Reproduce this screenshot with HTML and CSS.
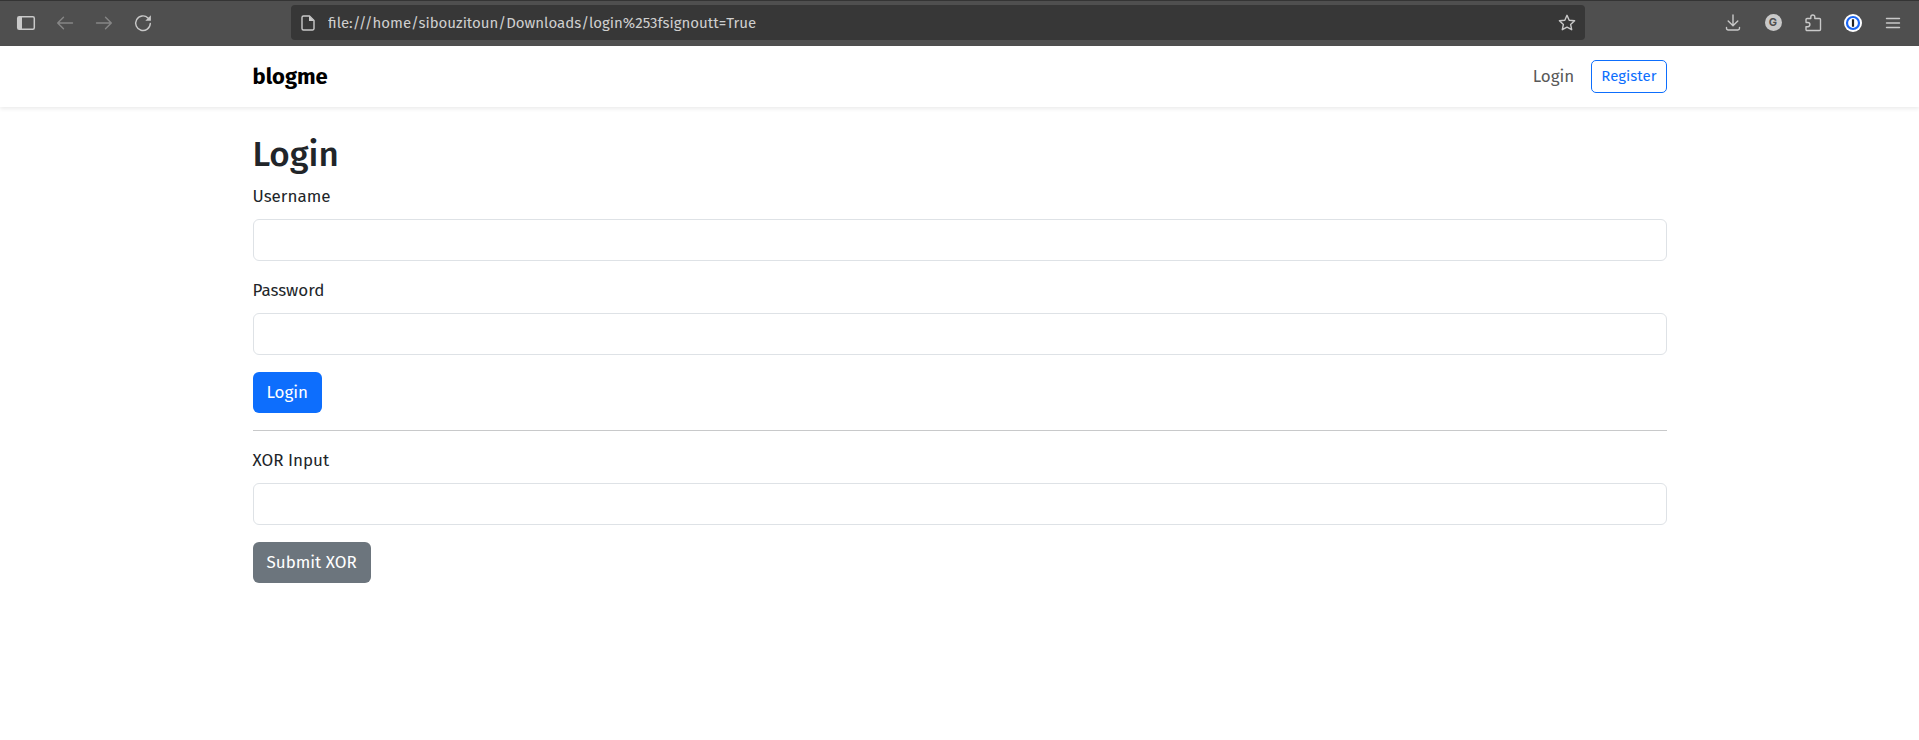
FILE: index.html
```html
<!DOCTYPE html>
<html lang="en">
<head>
    <meta charset="UTF-8">
    <meta name="viewport" content="width=device-width, initial-scale=1.0">
    <title>Login</title>
    <link rel="stylesheet" href="styles.css">
</head>
<body>
    <div class="toolbar">
        <div class="toolbar-left">
            <button type="button" class="tool" aria-label="Sidebar">
                <svg width="20" height="20" viewBox="0 0 20 20"><rect x="1.7" y="3.7" width="16.6" height="12.6" rx="1.5" fill="none" stroke="#c9c9c9" stroke-width="1.5"/><path d="M2 4h4v12H2z" fill="#c9c9c9"/></svg>
            </button>
            <button type="button" class="tool" aria-label="Back" disabled>
                <svg width="20" height="20" viewBox="0 0 20 20" class="line dim"><path d="M17.5 10H3M8.5 4.2L2.7 10l5.8 5.8"/></svg>
            </button>
            <button type="button" class="tool" aria-label="Forward" disabled>
                <svg width="20" height="20" viewBox="0 0 20 20" class="line dim"><path d="M2.5 10H17M11.5 4.2l5.8 5.8-5.8 5.8"/></svg>
            </button>
            <button type="button" class="tool" aria-label="Reload">
                <svg width="20" height="20" viewBox="0 0 20 20" class="line"><path d="M17.3 10.5a7.3 7.3 0 1 1-2.3-5.6l1 1"/><path d="M17.9 2.2v5.6h-5.6z" fill="#c9c9c9" stroke="none"/></svg>
            </button>
        </div>
        <div class="url-bar">
            <svg width="16" height="18" viewBox="0 0 16 18" class="line"><path d="M3.5 2h6L14 6.5v8a1.5 1.5 0 0 1-1.5 1.5h-9A1.5 1.5 0 0 1 2 14.5v-11A1.5 1.5 0 0 1 3.5 2z"/><path d="M9 2v5h5z" fill="#c9c9c9" stroke="none"/></svg>
            <input type="text" class="url-input" aria-label="Address" value="file:///home/sibouzitoun/Downloads/login%253fsignoutt=True">
            <button type="button" class="tool" aria-label="Bookmark">
                <svg width="20" height="20" viewBox="0 0 20 20" class="line"><path d="M10 2.3l2.2 4.9 5.4.6-4 3.6 1.100 5.300L10 14.100l-4.700 2.600 1.100-5.300-4-3.600 5.400-.6z"/></svg>
            </button>
        </div>
        <div class="toolbar-right">
            <button type="button" class="tool" aria-label="Downloads">
                <svg width="20" height="20" viewBox="0 0 20 20" class="line"><path d="M10 2v10.500M5.200 8l4.800 4.800L14.800 8M3.500 14.500v.8a1.700 1.700 0 0 0 1.700 1.700h9.600a1.700 1.700 0 0 0 1.700-1.700v-.8"/></svg>
            </button>
            <button type="button" class="tool" aria-label="Account">
                <span class="avatar">G</span>
            </button>
            <button type="button" class="tool" aria-label="Extensions">
                <svg width="20" height="20" viewBox="0 0 20 20" class="line"><path d="M3 8.500V6.500a1 1 0 0 1 1-1h3.800V4a2 2 0 0 1 4 0v1.500h4.700a1 1 0 0 1 1 1v10a1 1 0 0 1-1 1H4a1 1 0 0 1-1-1v-2.800h1.800a2.100 2.100 0 0 0 0-4.200H3"/></svg>
            </button>
            <button type="button" class="tool" aria-label="Password manager">
                <svg width="20" height="20" viewBox="0 0 20 20"><circle cx="10" cy="10" r="9" fill="#fff"/><circle cx="10" cy="10" r="6" fill="#fff" stroke="#1a66f5" stroke-width="2.2"/><rect x="8.900" y="6.300" width="2.200" height="7.400" rx=".5" fill="#222"/></svg>
            </button>
            <button type="button" class="tool" aria-label="Menu">
                <svg width="20" height="20" viewBox="0 0 20 20" class="line"><path d="M3.500 5.500h13M3.500 10h13M3.500 14.500h13"/></svg>
            </button>
        </div>
    </div>

    <header>
        <nav class="container navbar">
            <a class="brand" href="#">blogme</a>
            <div class="nav-links">
                <a class="nav-link" href="#">Login</a>
                <a class="btn-outline" href="#">Register</a>
            </div>
        </nav>
    </header>

    <main class="container content">
        <h2>Login</h2>
        <form>
            <label for="username">Username</label>
            <input type="text" class="form-control" id="username" name="username">

            <label for="password">Password</label>
            <input type="password" class="form-control" id="password" name="password">

            <button type="submit" class="btn btn-primary">Login</button>
        </form>
        <hr>
        <form>
            <label for="xor_input">XOR Input</label>
            <input type="text" class="form-control" id="xor_input" name="xor_input">

            <button type="submit" class="btn btn-secondary">Submit XOR</button>
        </form>
    </main>
</body>
</html>
```
FILE: styles.css
```css
* {
    box-sizing: border-box;
}

body {
    margin: 0;
    font-family: "Fira Sans", "Noto Sans", sans-serif;
    font-size: 17px;
    line-height: 26px;
    color: #212529;
    background: #fff;
}

/* browser toolbar */
.toolbar {
    display: flex;
    align-items: center;
    height: 46px;
    padding: 0 16px 2px;
    background: #4f4f4f;
    border-top: 1px solid #343434;
}

.toolbar-left,
.toolbar-right {
    display: flex;
    flex: none;
    gap: 19px;
    width: 275px;
}

.toolbar-right {
    justify-content: flex-end;
    gap: 20px;
    width: 318px;
}

.tool {
    display: flex;
    align-items: center;
    justify-content: center;
    width: 20px;
    height: 20px;
    padding: 0;
    border: none;
    background: none;
}

.line {
    fill: none;
    stroke: #c9c9c9;
    stroke-width: 1.4;
    stroke-linecap: round;
    stroke-linejoin: round;
}

.dim {
    stroke: #868686;
}

.url-bar {
    display: flex;
    flex: 1;
    align-items: center;
    gap: 12px;
    height: 35px;
    padding: 0 8px 0 9px;
    border-radius: 4px;
    background: #373737;
}

.url-input {
    flex: 1;
    padding: 0;
    border: none;
    outline: none;
    background: none;
    color: #cfcfcf;
    font-family: inherit;
    font-size: 15px;
}

.avatar {
    width: 17px;
    height: 17px;
    border-radius: 50%;
    background: #c9c9c9;
    color: #4f4f4f;
    font: bold 11px/17px "Inter", sans-serif;
    text-align: center;
}

/* page */
.container {
    width: 100%;
    max-width: 1438px;
    margin: 0 auto;
    padding: 0 12px;
}

header {
    padding: 14px 0;
    background: #fff;
    box-shadow: 0 2px 4px rgba(0, 0, 0, 0.08);
}

.navbar {
    display: flex;
    align-items: center;
    justify-content: space-between;
}

.brand {
    color: #000;
    font-size: 22px;
    font-weight: 700;
    text-decoration: none;
}

.nav-links {
    display: flex;
    align-items: center;
    gap: 17px;
}

.nav-link {
    color: #595959;
    text-decoration: none;
}

.btn-outline {
    padding: 3px 9px;
    border: 1px solid #0d6efd;
    border-radius: 5px;
    color: #0d6efd;
    font-size: 15px;
    line-height: 25px;
    text-decoration: none;
}

.content {
    padding-top: 26px;
}

h2 {
    margin: 0 0 9px;
    font-size: 35px;
    font-weight: 500;
    line-height: 42px;
}

label {
    display: block;
    margin-bottom: 9px;
}

.form-control {
    display: block;
    width: 100%;
    height: 42px;
    margin-bottom: 17px;
    padding: 6px 13px;
    border: 1px solid #dee2e6;
    border-radius: 6px;
    font: inherit;
}

.btn {
    display: block;
    height: 41px;
    padding: 0 14px;
    border: none;
    border-radius: 6px;
    color: #fff;
    font: inherit;
    cursor: pointer;
}

.btn-primary {
    background: #0d6efd;
}

.btn-secondary {
    background: #6c757d;
}

hr {
    margin: 17px 0;
    border: none;
    border-top: 1px solid #c8c9ca;
}
```
